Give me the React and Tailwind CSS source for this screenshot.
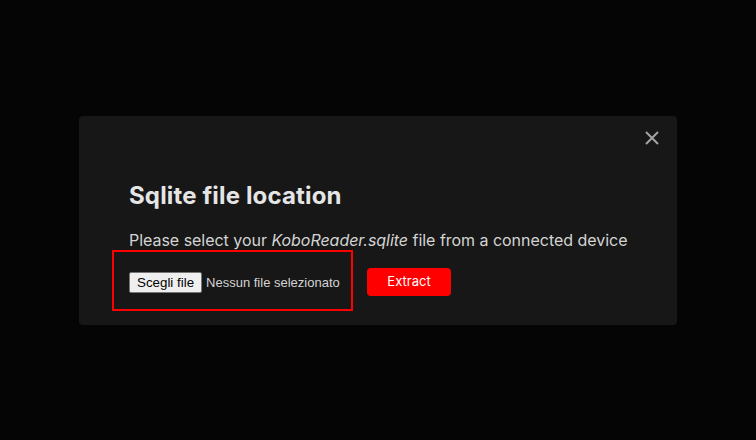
import React from 'react';

const CloseIcon = () => (
  <svg width="14" height="14" viewBox="0 0 14 14" fill="none" stroke="currentColor" strokeWidth="2">
    <path d="M1 1 L13 13 M13 1 L1 13" />
  </svg>
);

export default function App() {
  return (
    <div className="min-h-screen w-full bg-[#050505] flex items-center justify-center font-['Inter',sans-serif]">
      <div className="relative w-[598px] h-[209px] bg-[#171717] rounded-[4px] pl-[50px] pt-[64px]">
        {/* close */}
        <button className="absolute top-[15px] right-[18px] text-[#a3a3a3]">
          <CloseIcon />
        </button>

        <h2 className="text-[24px] leading-[32px] font-bold tracking-[0.15px] text-[#e5e5e5]">
          Sqlite file location
        </h2>
        <p className="mt-[18px] text-base leading-[20px] tracking-[-0.03px] text-[#d4d4d4]">
          Please select your <em>KoboReader.sqlite</em> file from a connected device
        </p>

        <div className="flex items-start">
          <div className="-ml-[17px] border-2 border-[#ff0000] w-[241px] h-[61px] pl-[15px] pt-[20px] flex items-start gap-[4px] font-['Liberation_Sans',sans-serif] text-[13px]">
            <span className="bg-[#efefef] border border-[#767676] rounded-[2px] text-black px-[7px] h-[21px] leading-[19px] text-[13.33px]">
              Scegli file
            </span>
            <span className="text-[#d4d4d4] whitespace-nowrap leading-[21px]">Nessun file selezionato</span>
          </div>
          <button className="ml-[14px] mt-[18px] w-[84px] h-[28px] bg-[#ff0000] rounded-[4px] text-white text-[13px] leading-none">
            Extract
          </button>
        </div>
      </div>
    </div>
  );
}
